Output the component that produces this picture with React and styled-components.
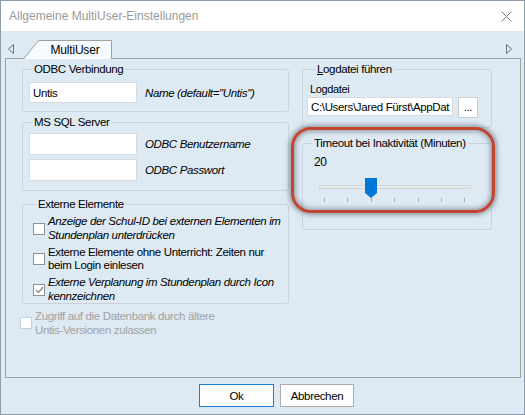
import React from "react";
import styled, { createGlobalStyle } from "styled-components";

const GlobalStyle = createGlobalStyle`
  html, body {
    margin: 0;
    padding: 0;
    background: #ffffff;
  }
  * {
    box-sizing: border-box;
  }
`;

const Window = styled.div`
  position: relative;
  width: 525px;
  height: 415px;
  border: 1px solid #8d9caa;
  display: flex;
  flex-direction: column;
  font-family: "Liberation Sans", Arial, sans-serif;
  font-size: 11px;
  letter-spacing: -0.35px;
  color: #000;
`;

const TitleBar = styled.div`
  height: 30px;
  background: #fff;
  display: flex;
  align-items: center;
  justify-content: space-between;
  padding: 0 12px 0 8px;
`;

const Title = styled.div`
  font-size: 12px;
  letter-spacing: 0;
  color: #9a9a9a;
`;

const Body = styled.div`
  flex: 1;
  background: #dde9f3;
  display: flex;
  flex-direction: column;
  padding: 0 3px 0 4px;
`;

const TabStrip = styled.div`
  height: 27px;
  display: flex;
  align-items: flex-end;
`;

const Arrow = styled.div`
  align-self: center;
  margin-top: 9px;
  margin-left: ${(p) => (p.$right ? "auto" : "3px")};
  margin-right: ${(p) => (p.$right ? "9px" : "0")};
  display: flex;
`;

const Tab = styled.div`
  position: relative;
  margin-left: 9px;
  width: 89px;
  height: 19px;
  margin-bottom: -1px;
  padding-left: 15px;
  display: flex;
  align-items: center;
  justify-content: center;
  font-size: 12px;
  letter-spacing: -0.2px;
  z-index: 1;

  svg {
    position: absolute;
    left: 0;
    top: 0;
  }
  span {
    position: relative;
    padding-top: 1px;
  }
`;

const Panel = styled.div`
  height: 320px;
  border: 1px solid #a0a0a0;
  display: grid;
  grid-template-columns: 269px 190px;
  column-gap: 13px;
  padding: 4px 0 0 14px;
  align-items: start;
`;

const Column = styled.div`
  display: flex;
  flex-direction: column;
`;

const Group = styled.fieldset`
  margin: ${(p) => p.$mt || 0}px 0 0 ${(p) => (p.$ml ?? 2)}px;
  padding: ${(p) => p.$pad};
  min-width: 0;
  border: 1px solid #c9d3db;
  border-radius: 3px;
  display: flex;
  flex-direction: column;
  gap: ${(p) => p.$gap || 0}px;
`;

const Legend = styled.legend`
  padding: 0 2px;
  margin-left: ${(p) => p.$ml || 3}px;
  line-height: 13px;
  font-size: 11.5px;

  u {
    text-decoration: underline;
  }
`;

const FieldRow = styled.div`
  display: flex;
  align-items: center;
  gap: 8px;
`;

const TextBox = styled.div`
  width: ${(p) => p.$w || 108}px;
  height: ${(p) => p.$h || 22}px;
  background: #fff;
  border: 1px solid #d6dbe0;
  padding: 0 2px 0 3px;
  display: flex;
  align-items: center;
  white-space: nowrap;
  overflow: hidden;
  font-size: 11.5px;
`;

const Hint = styled.span`
  font-style: italic;
  font-size: 11.5px;
`;

const CheckRow = styled.div`
  display: flex;
  align-items: center;
  gap: 3px;
  margin: ${(p) => p.$m || 0};
  color: ${(p) => (p.$disabled ? "#a3a3a3" : "#000")};
`;

const Box = styled.div`
  flex: none;
  width: 12px;
  height: 12px;
  background: #fff;
  border: 1px solid ${(p) => (p.$disabled ? "#bcd3e6" : "#8f8f8f")};
  display: flex;
  align-items: center;
  justify-content: center;
`;

const CheckText = styled.div`
  line-height: ${(p) => (p.$lh ? p.$lh : 13.5)}px;
  font-size: 11.5px;
  font-style: ${(p) => (p.$italic ? "italic" : "normal")};
`;

const Small = styled.div`
  margin: 7px 0 0 3px;
  line-height: 13px;
`;

const BrowseRow = styled.div`
  display: flex;
  align-items: flex-start;
  gap: 5px;
  margin-top: 1px;
`;

const SmallButton = styled.div`
  width: 20px;
  height: 21px;
  background: #fff;
  border: 1px solid #cfcfcf;
  display: flex;
  align-items: flex-end;
  justify-content: center;
  padding-bottom: 4px;
`;

const Value = styled.div`
  margin: 5px 0 0 7px;
  line-height: 14px;
  font-size: 12px;
`;

const Slider = styled.div`
  position: relative;
  margin: 9px 0 0 12px;
  width: 152px;
  height: 26px;
`;

const Track = styled.div`
  position: absolute;
  left: 0;
  right: 0;
  top: 7px;
  height: 4px;
  background: #e7eaea;
  border: 1px solid #d3d6d8;
`;

const Thumb = styled.div`
  position: absolute;
  top: 0;
  display: flex;
`;

const Tick = styled.div`
  position: absolute;
  top: 20px;
  width: 1px;
  height: 4px;
  background: #a8adb2;
`;

const Highlight = styled.div`
  position: absolute;
  left: 290px;
  top: 126px;
  width: 204px;
  height: 86px;
  border: 3px solid #c14530;
  border-radius: 20px;
  box-shadow: 0 0 4px 2px rgba(70, 80, 90, 0.5),
    inset 0 0 4px 2px rgba(70, 80, 90, 0.45);
  pointer-events: none;
`;

const ButtonRow = styled.div`
  flex: 1;
  display: flex;
  align-items: center;
  gap: 6px;
  padding: 0 0 1px 194px;
`;

const Button = styled.div`
  width: ${(p) => p.$w}px;
  height: 23px;
  background: #fdfdfd;
  border: 1px solid ${(p) => (p.$primary ? "#1a7fd4" : "#adadad")};
  display: flex;
  align-items: center;
  justify-content: center;
  font-size: 11.5px;
`;

const ArrowIcon = ({ right }) => (
  <svg width="6" height="10" viewBox="0 0 6 10">
    <path
      d={right ? "M0.5 0.5 L5.5 5 L0.5 9.5 Z" : "M5.5 0.5 L0.5 5 L5.5 9.5 Z"}
      fill="none"
      stroke="#6d7177"
    />
  </svg>
);

const Check = ({ checked, disabled, children, italic, m, lh }) => (
  <CheckRow $disabled={disabled} $m={m}>
    <Box $disabled={disabled}>
      {checked && (
        <svg width="9" height="8" viewBox="0 0 9 8">
          <path d="M1 4 L3.5 6.5 L8 1" fill="none" stroke="#8a8a8a" strokeWidth="1.3" />
        </svg>
      )}
    </Box>
    <CheckText $italic={italic} $lh={lh}>{children}</CheckText>
  </CheckRow>
);

const ticks = [0, 1, 2, 3, 4, 5, 6];

export default function App() {
  return (
    <>
      <GlobalStyle />
      <Window>
        <TitleBar>
          <Title>Allgemeine MultiUser-Einstellungen</Title>
          <svg width="11" height="11" viewBox="0 0 11 11">
            <path d="M0.5 0.5 L10.5 10.5 M10.5 0.5 L0.5 10.5" stroke="#7a7a7a" strokeWidth="1" />
          </svg>
        </TitleBar>
        <Body>
          <TabStrip>
            <Arrow>
              <ArrowIcon />
            </Arrow>
            <Tab>
              <svg width="89" height="19" viewBox="0 0 89 19">
                <path d="M0.5 19 L15.5 0.5 L88.5 0.5 L88.5 19" fill="#f5fafe" stroke="#a0a0a0" />
              </svg>
              <span>MultiUser</span>
            </Tab>
            <Arrow $right>
              <ArrowIcon right />
            </Arrow>
          </TabStrip>
          <Panel>
            <Column>
              <Group $pad="6px 6px 8px 6px">
                <Legend>ODBC Verbindung</Legend>
                <FieldRow>
                  <TextBox $h={21}>Untis</TextBox>
                  <Hint>Name (default="Untis")</Hint>
                </FieldRow>
              </Group>
              <Group $mt={4} $pad="4px 6px 9px 6px" $gap={4}>
                <Legend>MS SQL Server</Legend>
                <FieldRow>
                  <TextBox />
                  <Hint>ODBC Benutzername</Hint>
                </FieldRow>
                <FieldRow>
                  <TextBox />
                  <Hint>ODBC Passwort</Hint>
                </FieldRow>
              </Group>
              <Group $mt={7} $pad="4px 4px 0 10px" $gap={3.5}>
                <Legend>Externe Elemente</Legend>
                <Check italic>
                  Anzeige der Schul-ID bei externen Elementen im
                  <br />
                  Stundenplan unterdrücken
                </Check>
                <Check>
                  Externe Elemente ohne Unterricht: Zeiten nur
                  <br />
                  beim Login einlesen
                </Check>
                <Check italic checked>
                  Externe Verplanung im Stundenplan durch Icon
                  <br />
                  kennzeichnen
                </Check>
              </Group>
              <Check disabled m="5px 0 0 0" lh={14}>
                Zugriff auf die Datenbank durch ältere
                <br />
                Untis-Versionen zulassen
              </Check>
            </Column>
            <Column>
              <Group $ml={0} $pad="0 4px 9px 4px">
                <Legend $ml={8}>
                  <u>L</u>ogdatei führen
                </Legend>
                <Small>Logdatei</Small>
                <BrowseRow>
                  <TextBox $w={146} $h={19}>C:\Users\Jared Fürst\AppDat</TextBox>
                  <SmallButton>...</SmallButton>
                </BrowseRow>
              </Group>
              <Group $ml={0} $mt={9} $pad="0 4px 25px 4px">
                <Legend $ml={5}>Timeout bei Inaktivität (Minuten)</Legend>
                <Value>20</Value>
                <Slider>
                  <Track />
                  <Thumb style={{ left: 46 }}>
                    <svg width="12" height="20" viewBox="0 0 12 20">
                      <path d="M0 0 H12 V15 L6 20 L0 15 Z" fill="#0078d7" />
                    </svg>
                  </Thumb>
                  {ticks.map((t) => (
                    <Tick key={t} style={{ left: 5 + t * 23.4 }} />
                  ))}
                </Slider>
              </Group>
            </Column>
          </Panel>
          <ButtonRow>
            <Button $w={75} $primary>Ok</Button>
            <Button $w={74}>Abbrechen</Button>
          </ButtonRow>
        </Body>
        <Highlight />
      </Window>
    </>
  );
}
